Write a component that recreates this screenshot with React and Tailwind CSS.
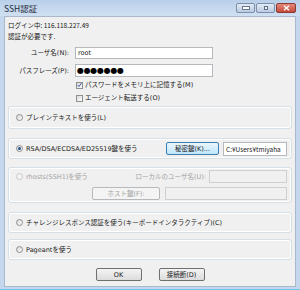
const Radio = ({ checked, disabled }) => (
  <span
    className={`inline-flex items-center justify-center w-[7px] h-[7px] rounded-full border shrink-0 ${
      disabled
        ? "border-[#c8c8c8] bg-[#f4f4f4]"
        : "border-[#8e8f8f] bg-gradient-to-br from-[#d8d8d8] to-[#fbfbfb]"
    }`}
  >
    {checked && <span className="w-[3px] h-[3px] rounded-full bg-[#1f4f8f]" />}
  </span>
);

const Check = ({ checked }) => (
  <span className="inline-flex items-center justify-center w-[7px] h-[7px] border border-[#8e8f8f] bg-gradient-to-br from-[#dcdcdc] to-[#fbfbfb] shrink-0">
    {checked && (
      <svg width="6" height="6" viewBox="0 0 6 6">
        <path d="M0.8 3.1 L2.4 4.8 L5.3 0.8" stroke="#3d56a0" strokeWidth="1.2" fill="none" />
      </svg>
    )}
  </span>
);

const Btn = ({ children, w, focus, disabled }) => (
  <div
    className={`${w} h-[13px] flex items-center justify-center rounded-[2px] border ${
      focus
        ? "border-[#3c7fb1] bg-gradient-to-b from-[#eaf6fd] to-[#bee6fd]"
        : disabled
        ? "border-[#b5b9bc] bg-[#f4f4f4] text-[#a0a0a0]"
        : "border-[#707070] bg-gradient-to-b from-[#f4f4f4] to-[#dcdcdc]"
    }`}
  >
    {children}
  </div>
);

const Group = ({ className, children }) => (
  <div className={`mx-[3px] rounded-[3px] border border-[#d5dfe5] shadow-[inset_0_0_0_1px_#ffffff] ${className}`}>
    {children}
  </div>
);

export default function App() {
  return (
    <div className="w-[300px] h-[290px] flex flex-col bg-[#c4d7ed] text-[6.5px] leading-[10px] text-[#1a1a1a] font-['DejaVu_Sans','Noto_Sans_CJK_JP',sans-serif]">
      {/* title bar */}
      <div className="h-[16px] flex items-start bg-gradient-to-b from-[#b9cfe9] to-[#d0e0f2] px-[4px] pt-[3px] shrink-0">
        <span className="text-[8.5px] leading-[10px] text-[#1e2a3a] font-['Noto_Sans_CJK_JP',sans-serif]">SSH認証</span>
        <div className="ml-auto flex gap-[1px]">
          <div className="w-[19px] h-[10px] rounded-[2px] border border-[#7d8fa9] bg-gradient-to-b from-[#e2ebf6] to-[#bccbe0] flex items-center justify-center">
            <span className="w-[6px] h-[2px] bg-white border border-[#6a7a90] box-content" />
          </div>
          <div className="w-[19px] h-[10px] rounded-[2px] border border-[#7d8fa9] bg-gradient-to-b from-[#e2ebf6] to-[#bccbe0] flex items-center justify-center">
            <span className="w-[4px] h-[4px] border border-[#5e6e86] bg-[#f2f6fb]" />
          </div>
          <div className="w-[20px] h-[10px] rounded-[2px] border border-[#8d3b32] bg-gradient-to-b from-[#e4897b] to-[#c54a3a] flex items-center justify-center">
            <svg width="7" height="6" viewBox="0 0 7 6">
              <path d="M1 0.8 L6 5.2 M6 0.8 L1 5.2" stroke="#ffffff" strokeWidth="1.4" />
            </svg>
          </div>
        </div>
      </div>

      {/* client */}
      <div className="flex-1 mx-[4px] bg-[#f0f0f0] border border-[#a9b8ca] flex flex-col">
        <div className="pl-[3px] mt-[3px] font-['Noto_Sans_CJK_JP',sans-serif]">ログイン中: 116.118.227.49</div>
        <div className="pl-[3px] mt-[2px]">認証が必要です.</div>

        <div className="flex items-center mt-[5px] h-[12px]">
          <div className="w-[64px] text-right">ユーザ名(N):</div>
          <div className="ml-[6px] w-[138px] h-[12px] bg-white border border-[#b5b8bd] flex items-center pl-[2px]">root</div>
        </div>
        <div className="flex items-center mt-[5px] h-[13px]">
          <div className="w-[64px] text-right">パスフレーズ(P):</div>
          <div className="ml-[6px] w-[138px] h-[13px] bg-white border border-[#b5b8bd] flex items-center pl-[1px] text-[8px] leading-[8px] tracking-[-0.3px] text-black">
            ●●●●●●●
          </div>
        </div>
        <div className="flex items-center gap-[2px] pl-[71px] mt-[3px] h-[10px]">
          <Check checked />
          <span>パスワードをメモリ上に記憶する(M)</span>
        </div>
        <div className="flex items-center gap-[2px] pl-[71px] mt-[3px] h-[10px]">
          <Check />
          <span>エージェント転送する(O)</span>
        </div>

        <Group className="mt-[3px] h-[23px] flex items-center pl-[7px] gap-[3px]">
          <Radio />
          <span>プレインテキストを使う(L)</span>
        </Group>

        <Group className="mt-[9px] h-[21px] flex items-center pl-[7px] pr-[4px]">
          <Radio checked />
          <span className="ml-[3px]">RSA/DSA/ECDSA/ED25519鍵を使う</span>
          <div className="ml-auto">
            <Btn w="w-[53px]" focus>秘密鍵(K)...</Btn>
          </div>
          <div className="ml-[4px] w-[64px] h-[14px] bg-white border border-[#b5b8bd] flex items-center pl-[2px] overflow-hidden whitespace-nowrap font-['Noto_Sans_CJK_JP',sans-serif]">
            C:¥Users¥tmiyaha
          </div>
        </Group>

        <Group className="mt-[8px] h-[36px] flex flex-col pt-[2px] pr-[4px] text-[#a3a3a3]">
          <div className="flex items-center h-[13px] pl-[7px]">
            <Radio disabled />
            <span className="ml-[3px]">rhosts(SSH1)を使う</span>
            <span className="ml-auto mr-[3px]">ローカルのユーザ名(U):</span>
            <div className="w-[78px] h-[13px] bg-[#f0f0f0] border border-[#cdd0d3]" />
          </div>
          <div className="flex items-center h-[13px] mt-[4px]">
            <div className="ml-[83px]">
              <Btn w="w-[68px]" disabled>ホスト鍵(F):</Btn>
            </div>
            <div className="ml-[5px] flex-1 h-[13px] bg-[#f0f0f0] border border-[#cdd0d3]" />
          </div>
        </Group>

        <Group className="mt-[9px] h-[21px] flex items-center pl-[7px] gap-[3px]">
          <Radio />
          <span>チャレンジレスポンス認証を使う(キーボードインタラクティブ)(C)</span>
        </Group>

        <Group className="mt-[6px] h-[21px] flex items-center pl-[7px] gap-[3px]">
          <Radio />
          <span>Pageantを使う</span>
        </Group>

        <div className="mt-[8px] flex justify-center gap-[17px]">
          <Btn w="w-[46px]">OK</Btn>
          <Btn w="w-[46px]">接続断(D)</Btn>
        </div>
      </div>
      <div className="h-[3px] shrink-0 border-b border-[#6fc3e3]" />
    </div>
  );
}
